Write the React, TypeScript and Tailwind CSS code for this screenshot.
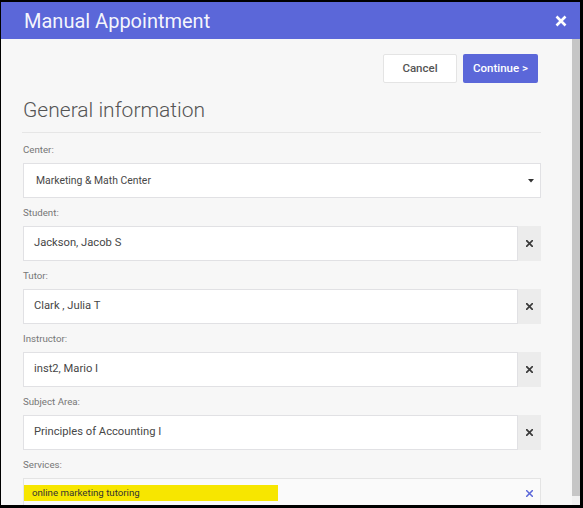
import type { ReactNode } from 'react'

const font = { fontFamily: 'Roboto, "Liberation Sans", sans-serif' }

function XMark({ size = 7, color = '#333', weight = 2 }: { size?: number; color?: string; weight?: number }) {
  return (
    <svg width={size} height={size} viewBox="0 0 10 10">
      <path d="M1 1L9 9M9 1L1 9" stroke={color} strokeWidth={weight} strokeLinecap="square" />
    </svg>
  )
}

function Label({ children }: { children: ReactNode }) {
  return <div className="h-[28px] pt-[9px] text-[9.7px] leading-[12px] text-[#767676]">{children}</div>
}

function ClearField({ label, value }: { label: string; value: string }) {
  return (
    <div>
      <Label>{label}</Label>
      <div className="flex h-[35px]">
        <div className="flex flex-1 items-center border border-[#e1e1e4] bg-white pl-[10px] text-[11.2px] text-[#474747]">
          {value}
        </div>
        <div className="flex w-[23px] items-center justify-center bg-[#ececec]">
          <XMark size={7} color="#3a3a3a" weight={2.4} />
        </div>
      </div>
    </div>
  )
}

export default function App() {
  return (
    <div className="flex h-[508px] w-[583px] flex-col bg-black pb-[3px] pl-[1px] pr-[3px] pt-[2px]" style={font}>
      <div className="flex h-[37px] shrink-0 items-center justify-between bg-[#5b67d9] pl-[23px] pr-[13px]">
        <span className="text-[20px] leading-none text-white/95">Manual Appointment</span>
        <svg width="12" height="12" viewBox="0 0 12 12">
          <path d="M1.5 1.5L10.5 10.5M10.5 1.5L1.5 10.5" stroke="white" strokeWidth="2.6" />
        </svg>
      </div>

      <div className="flex min-h-0 flex-1">
        <div className="flex-1 overflow-hidden bg-[#f7f7f7] pl-[22px] pr-[31px] pt-[15px]">
          <div className="flex justify-end gap-[6px] pr-[3px]">
            <button className="h-[29px] w-[74px] rounded-[2px] border border-[#e4e4e4] bg-white text-[11.5px] font-medium text-[#555]">
              Cancel
            </button>
            <button className="h-[29px] w-[75px] rounded-[2px] bg-[#5b67d9] text-[11.5px] font-medium text-white">
              Continue &gt;
            </button>
          </div>

          <h2 className="mt-[15px] text-[21px] font-light leading-[24px] text-[#555]">General information</h2>
          <div className="ml-[-1px] mt-[10px] h-px bg-[#e6e6e6]" />

          <div className="mt-[2px]">
            <Label>Center:</Label>
            <div className="flex h-[35px] items-center justify-between border border-[#e1e1e4] bg-white pl-[12px] pr-[6px] text-[10.4px] text-[#474747]">
              <span>Marketing &amp; Math Center</span>
              <svg width="6" height="4" viewBox="0 0 6 4">
                <path d="M0 0H6L3 3.5Z" fill="#333" />
              </svg>
            </div>
          </div>

          <ClearField label="Student:" value="Jackson, Jacob S" />
          <ClearField label="Tutor:" value="Clark , Julia T" />
          <ClearField label="Instructor:" value="inst2, Mario I" />
          <ClearField label="Subject Area:" value="Principles of Accounting I" />

          <div>
            <Label>Services:</Label>
            <div className="flex h-[35px] items-start justify-between border border-[#e4e4e4] bg-[#fafafa] pr-[7px] pt-[6px]">
              <span className="flex h-[16px] w-[254px] items-center bg-[#f7e600] pl-[8px] text-[9.7px] text-[#333]">
                online marketing tutoring
              </span>
              <span className="pt-[5px]">
                <XMark size={7} color="#5b67d9" weight={2.2} />
              </span>
            </div>
          </div>
        </div>
        <div className="flex w-[8px] flex-col bg-[#f1f1f1]">
          <div className="mb-[9px] flex-1 bg-[#c6c6c6]" />
        </div>
      </div>
    </div>
  )
}
